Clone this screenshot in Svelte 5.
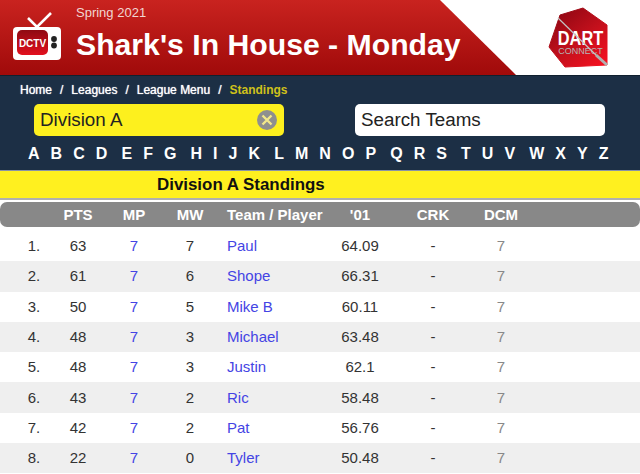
<script>
  const crumbs = ['Home', 'Leagues', 'League Menu'];
  // the alphabet is printed in small runs with a wider gap between them
  const letterGroups = ['ABCD', 'EFG', 'HIJK', 'LMNOP', 'QRS', 'TUV', 'WXYZ'];

  const rows = [
    { pts: 63, mp: 7, mw: 7, name: 'Paul', avg: '64.09', dcm: 7 },
    { pts: 61, mp: 7, mw: 6, name: 'Shope', avg: '66.31', dcm: 7 },
    { pts: 50, mp: 7, mw: 5, name: 'Mike B', avg: '60.11', dcm: 7 },
    { pts: 48, mp: 7, mw: 3, name: 'Michael', avg: '63.48', dcm: 7 },
    { pts: 48, mp: 7, mw: 3, name: 'Justin', avg: '62.1', dcm: 7 },
    { pts: 43, mp: 7, mw: 2, name: 'Ric', avg: '58.48', dcm: 7 },
    { pts: 42, mp: 7, mw: 2, name: 'Pat', avg: '56.76', dcm: 7 },
    { pts: 22, mp: 7, mw: 0, name: 'Tyler', avg: '50.48', dcm: 7 }
  ];
</script>

<div class="page">
  <header class="top">
    <div class="banner">
      <svg class="tv" width="50" height="50" viewBox="0 0 50 50" aria-hidden="true">
        <defs>
          <linearGradient id="tvScreen" x1="0" y1="0" x2="0" y2="1">
            <stop offset="0" stop-color="#8e0a12" />
            <stop offset="1" stop-color="#e2101e" />
          </linearGradient>
        </defs>
        <path d="M15 6 L24 15 L38 1" fill="none" stroke="#fff" stroke-width="2.6" />
        <rect x="0" y="15" width="48" height="33" rx="4" fill="#fff" />
        <rect x="4" y="18" width="31" height="25" rx="5" fill="url(#tvScreen)" />
        <circle cx="41" cy="27" r="2.9" fill="#222" />
        <circle cx="41" cy="33.5" r="2.9" fill="#222" />
        <text x="19.5" y="35" text-anchor="middle" class="tv-label">DCTV</text>
      </svg>
      <div class="titles">
        <div class="season">Spring 2021</div>
        <h1>Shark's In House - Monday</h1>
      </div>
    </div>
    <div class="brand">
      <svg width="62" height="62" viewBox="0 0 62 62" aria-hidden="true">
        <defs>
          <linearGradient id="flight" x1="0.1" y1="0" x2="0.9" y2="1">
            <stop offset="0" stop-color="#8a0612" />
            <stop offset="0.55" stop-color="#c4101c" />
            <stop offset="1" stop-color="#f5101f" />
          </linearGradient>
        </defs>
        <path d="M12 8 L35 1 L59 18 L59 58 L17 60 L1 40 Z" fill="url(#flight)" stroke="url(#flight)" stroke-linejoin="round" />
        <text transform="translate(32.5 38) scale(0.78 1)" text-anchor="middle" class="dart">DART</text>
        <text x="32.5" y="46.5" text-anchor="middle" class="connect">CONNECT</text>
        <path d="M10 11 L50 50" stroke="#c4c4c4" stroke-width="1.2" />
        <path d="M48 48 L59 58" stroke="#b0b0b0" stroke-width="3" />
      </svg>
    </div>
  </header>

  <nav class="controls">
    <div class="crumbs">
      {#each crumbs as crumb}
        <span>{crumb}</span><span class="sep">/</span>
      {/each}
      <span class="current">Standings</span>
    </div>
    <div class="inputs">
      <div class="field division">
        <span>Division A</span>
        <svg width="20" height="20" viewBox="0 0 20 20" aria-hidden="true">
          <circle cx="10" cy="10" r="10" fill="#8f8f8f" />
          <path d="M5.5 5.5 L14.5 14.5 M14.5 5.5 L5.5 14.5" stroke="#f3e88a" stroke-width="2.4" />
        </svg>
      </div>
      <div class="field search"><span>Search Teams</span></div>
    </div>
    <div class="letters">
      {#each letterGroups as group}
        <div class="letter-group">
          {#each group.split('') as letter}
            <span>{letter}</span>
          {/each}
        </div>
      {/each}
    </div>
  </nav>

  <h2>Division A Standings</h2>

  <div class="thead grid">
    <span></span>
    <span>PTS</span>
    <span>MP</span>
    <span>MW</span>
    <span class="name">Team / Player</span>
    <span>'01</span>
    <span>CRK</span>
    <span>DCM</span>
  </div>

  <div class="tbody">
    {#each rows as row, i}
      <div class="row grid" class:odd={i % 2 === 1}>
        <span class="rank">{i + 1}.</span>
        <span>{row.pts}</span>
        <span class="link">{row.mp}</span>
        <span>{row.mw}</span>
        <span class="name link">{row.name}</span>
        <span>{row.avg}</span>
        <span>-</span>
        <span class="muted">{row.dcm}</span>
      </div>
    {/each}
  </div>
</div>

<style>
  :global(body) {
    background: #fff;
  }

  .page {
    width: 640px;
    height: 474px;
    overflow: hidden;
    font-family: "Liberation Sans", Arial, sans-serif;
    color: #222;
  }

  .top {
    display: flex;
    height: 76px;
    border-bottom: 1px solid #10202f;
    box-sizing: border-box;
  }

  .banner {
    display: flex;
    gap: 13px;
    width: 516px;
    padding: 12px 0 0 13px;
    box-sizing: border-box;
    background: linear-gradient(#c9231f, #a00a0a);
    clip-path: polygon(0 0, 440px 0, 516px 100%, 0 100%);
  }

  .tv-label {
    font: bold 10px "Liberation Sans", sans-serif;
    fill: #fff;
  }

  .titles {
    margin-top: -7px;
  }

  .season {
    font-size: 13px;
    line-height: 16px;
    color: #f1d6d2;
  }

  h1 {
    margin: 4px 0 0;
    font-size: 30.2px;
    line-height: 40px;
    font-weight: bold;
    color: #fff;
    white-space: nowrap;
  }

  .brand {
    padding: 7px 0 0 32px;
  }

  .dart {
    font: bold 21px "Liberation Sans", sans-serif;
    fill: #fff;
  }

  .connect {
    font: 9px "Liberation Sans", sans-serif;
    fill: #b5b5b5;
  }

  .controls {
    height: 94px;
    padding-top: 7px;
    box-sizing: border-box;
    background: #1c2f45;
    color: #fff;
  }

  .crumbs {
    display: flex;
    padding-left: 20px;
    font-size: 12px;
    line-height: 15px;
    text-shadow: 0 0 1px #fff;
  }

  .sep {
    margin: 0 8px;
  }

  .current {
    font-weight: bold;
    color: #cfc01a;
    text-shadow: none;
  }

  .inputs {
    display: flex;
    gap: 71px;
    padding: 6px 0 0 34px;
  }

  .field {
    display: flex;
    align-items: center;
    justify-content: space-between;
    width: 250px;
    height: 32px;
    padding: 0 7px 0 6px;
    box-sizing: border-box;
    border-radius: 5px;
    font-size: 18.8px;
    color: #222;
  }

  .division {
    background: #fdf01e;
  }

  .search {
    background: #fff;
  }

  .letters {
    display: flex;
    gap: 14.06px;
    padding: 9px 0 0 28px;
    font-size: 16px;
    line-height: 18px;
    font-weight: bold;
  }

  .letter-group {
    display: flex;
    gap: 11.06px;
  }

  h2 {
    margin: 0;
    height: 30px;
    padding-left: 157px;
    box-sizing: border-box;
    border-top: 1px solid #8a93a5;
    border-bottom: 2px solid #b0b0b0;
    background: #fff01f;
    font-size: 16.9px;
    line-height: 27px;
    font-weight: bold;
    color: #111;
  }

  .grid {
    display: grid;
    grid-template-columns: 50px 56px 56px 56px 102px 80px 66px 70px 104px;
    align-items: center;
    text-align: center;
  }

  .name {
    padding-left: 9px;
    text-align: left;
    white-space: nowrap;
  }

  .thead {
    height: 25px;
    margin-top: 2px;
    border-radius: 7px;
    background: #888;
    color: #fff;
    font-size: 15px;
    font-weight: bold;
  }

  .tbody {
    margin-top: 4px;
  }

  .row {
    height: 30.3px;
    font-size: 15px;
    line-height: 28px;
    color: #333;
  }

  .odd {
    background: #efefef;
  }

  .rank {
    padding-left: 18px;
  }

  .link {
    color: #4444e4;
  }

  .muted {
    color: #888;
  }
</style>
